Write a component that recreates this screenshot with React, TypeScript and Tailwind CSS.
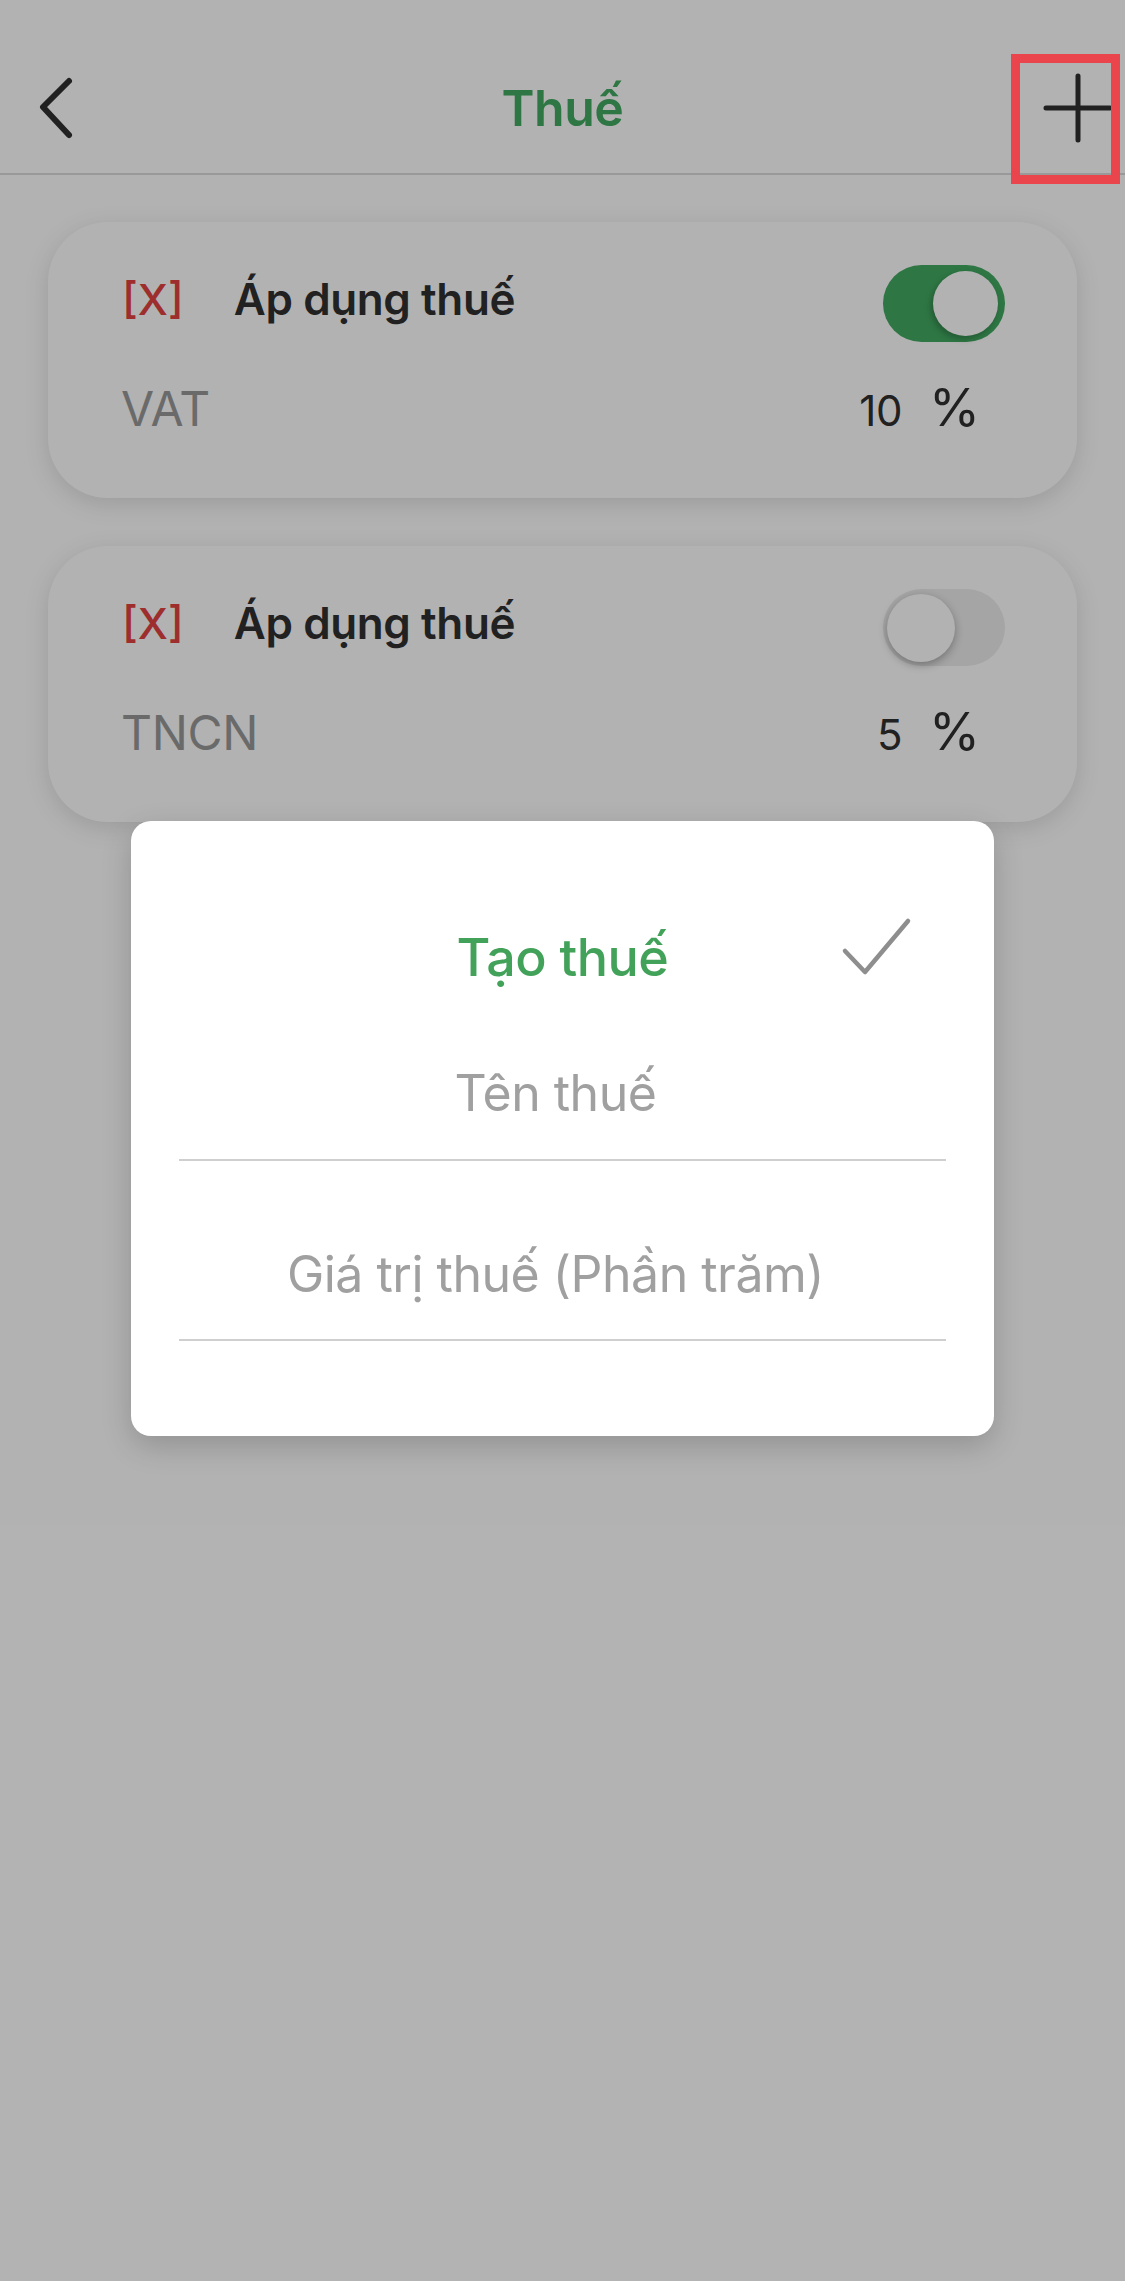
import React from "react";

function BackIcon() {
  return (
    <svg width="40" height="64" viewBox="0 0 40 64" fill="none">
      <path
        d="M33 5 L7 31 L33 59"
        stroke="#303030"
        strokeWidth="6"
        strokeLinecap="round"
        strokeLinejoin="round"
      />
    </svg>
  );
}

function PlusIcon() {
  return (
    <svg width="70" height="70" viewBox="0 0 70 70" fill="none">
      <path
        d="M35 3 V67 M3 35 H67"
        stroke="#303030"
        strokeWidth="5"
        strokeLinecap="round"
      />
    </svg>
  );
}

function CheckIcon() {
  return (
    <svg width="72" height="62" viewBox="0 0 72 62" fill="none">
      <path
        d="M4 35 L24 56 L67 5"
        stroke="#8e8e8e"
        strokeWidth="4.5"
        strokeLinecap="round"
        strokeLinejoin="round"
      />
    </svg>
  );
}

function Toggle({ on }: { on: boolean }) {
  return (
    <div
      className={
        on
          ? "flex h-[77px] w-[122px] shrink-0 items-center justify-end rounded-full bg-[#42aa61] px-[7px]"
          : "flex h-[77px] w-[122px] shrink-0 items-center justify-start rounded-full bg-[#ececec] px-[4px]"
      }
    >
      <div
        className={
          on
            ? "h-[65px] w-[65px] rounded-full bg-white shadow-[-2px_3px_6px_rgba(0,0,0,0.25)]"
            : "h-[68px] w-[68px] rounded-full bg-white shadow-[0_3px_8px_rgba(0,0,0,0.3)]"
        }
      />
    </div>
  );
}

const taxes = [
  { name: "VAT", value: "10", on: true },
  { name: "TNCN", value: "5", on: false },
];

function TaxCard({ name, value, on }: { name: string; value: string; on: boolean }) {
  return (
    <div className="h-[276px] rounded-[60px] bg-white shadow-[0_6px_24px_rgba(0,0,0,0.13)]">
      <div className="flex items-start pl-[74px] pr-[72px] pt-[43px]">
        <span className="mt-[4px] text-[43px] font-medium leading-[60px] text-[#e24343]">[X]</span>
        <span className="ml-[50px] mt-[4px] text-[44px] font-semibold leading-[60px] tracking-[-0.4px] text-[#303030]">
          Áp dụng thuế
        </span>
        <div className="ml-auto">
          <Toggle on={on} />
        </div>
      </div>
      <div className="mt-[38px] flex items-baseline pl-[73px] pr-[97px]">
        <span className="text-[48px] leading-[56px] tracking-[-0.3px] text-[#999999]">{name}</span>
        <span className="ml-auto text-[42px] leading-[56px] tracking-[-0.5px] text-[#303030]">{value}</span>
        <span className="ml-[27px] text-[52px] leading-[56px] text-[#303030]">%</span>
      </div>
    </div>
  );
}

export default function App() {
  return (
    <div className="relative h-[2281px] w-full overflow-hidden bg-white font-[Inter,'Noto_Sans',sans-serif]">
      <header className="grid h-[175px] grid-cols-[1fr_auto_1fr] items-center border-b-2 border-[#dcdcdc] pt-[42px]">
        <div className="pl-[36px]">
          <BackIcon />
        </div>
        <h1 className="text-[50px] font-semibold leading-[60px] tracking-[-0.5px] text-[#42aa61]">Thuế</h1>
        <div className="flex justify-end pr-[12px]">
          <PlusIcon />
        </div>
      </header>

      <main className="flex flex-col gap-[48px] px-[48px] pt-[47px]">
        {taxes.map((t) => (
          <TaxCard key={t.name} name={t.name} value={t.value} on={t.on} />
        ))}
      </main>

      {/* dim layer behind the dialog */}
      <div className="absolute inset-0 z-10 bg-black/30" />

      {/* highlight around the add button */}
      <div className="absolute left-[1011px] top-[54px] z-30 h-[130px] w-[109px] border-[9px] border-[#ea444c]" />

      <div className="absolute left-[131px] top-[821px] z-20 h-[615px] w-[863px] rounded-[20px] bg-white px-[48px] shadow-[0_10px_30px_rgba(0,0,0,0.18)]">
        <div className="relative pt-[107px]">
          <h2 className="text-center text-[52px] font-medium leading-[60px] tracking-[-0.5px] text-[#43a25a]">
            Tạo thuế
          </h2>
          <div className="absolute right-[33px] top-[95px]">
            <CheckIcon />
          </div>
        </div>
        <div className="mt-[75px] border-b-2 border-[#cfcfcf] pb-[36px]">
          <input
            className="block h-[60px] w-full bg-transparent pr-[14px] text-center text-[50px] tracking-[-0.5px] text-[#303030] outline-none placeholder:text-[#a0a0a0]"
            placeholder="Tên thuế"
          />
        </div>
        <div className="mt-[83px] border-b-2 border-[#cfcfcf] pb-[35px]">
          <input
            className="block h-[60px] w-full bg-transparent pr-[14px] text-center text-[50px] tracking-[-0.5px] text-[#303030] outline-none placeholder:text-[#a0a0a0]"
            placeholder="Giá trị thuế (Phần trăm)"
          />
        </div>
      </div>
    </div>
  );
}
